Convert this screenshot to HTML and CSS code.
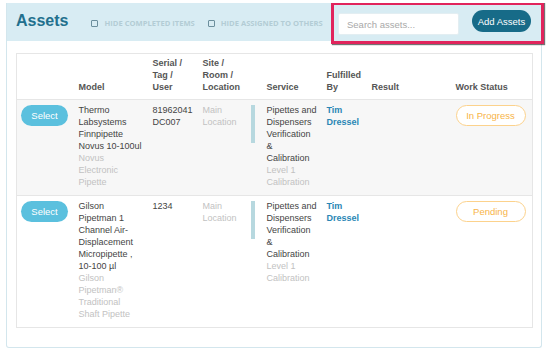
FILE: index.html
```html
<!DOCTYPE html>
<html>
<head>
<meta charset="utf-8">
<link rel="stylesheet" href="styles.css">
</head>
<body>
<div class="panel">
  <div class="panel-head">
    <h1 class="title">Assets</h1>
    <label class="check"><span class="box"></span>Hide completed items</label>
    <label class="check"><span class="box"></span>Hide assigned to others</label>
    <div class="tools">
      <input class="search" type="text" placeholder="Search assets...">
      <button class="add">Add Assets</button>
    </div>
    <div class="highlight"></div>
  </div>
  <div class="panel-body">
    <table class="assets">
      <colgroup>
        <col class="c-sel"><col class="c-model"><col class="c-serial"><col class="c-site"><col class="c-service"><col class="c-by"><col class="c-result"><col class="c-status">
      </colgroup>
      <thead>
        <tr>
          <th></th>
          <th>Model</th>
          <th>Serial / Tag / User</th>
          <th>Site / Room / Location</th>
          <th class="th-service">Service</th>
          <th>Fulfilled By</th>
          <th>Result</th>
          <th>Work Status</th>
        </tr>
      </thead>
      <tbody>
        <tr class="shaded">
          <td><button class="select">Select</button></td>
          <td><div class="model">Thermo Labsystems Finnpipette Novus 10-100ul</div><div class="muted model">Novus Electronic Pipette</div></td>
          <td><div class="serial">81962041 DC007</div></td>
          <td class="muted">Main Location</td>
          <td class="svc"><div class="service"><span class="bar"></span><div class="svc-text">Pipettes and Dispensers Verification &amp; Calibration<div class="muted">Level 1 Calibration</div></div></div></td>
          <td class="person">Tim Dressel</td>
          <td></td>
          <td><span class="status">In Progress</span></td>
        </tr>
        <tr>
          <td><button class="select">Select</button></td>
          <td><div class="model">Gilson Pipetman 1 Channel Air-Displacement Micropipette , 10-100 µl</div><div class="muted model">Gilson Pipetman® Traditional Shaft Pipette</div></td>
          <td><div class="serial">1234</div></td>
          <td class="muted">Main Location</td>
          <td class="svc"><div class="service"><span class="bar"></span><div class="svc-text">Pipettes and Dispensers Verification &amp; Calibration<div class="muted">Level 1 Calibration</div></div></div></td>
          <td class="person">Tim Dressel</td>
          <td></td>
          <td><span class="status">Pending</span></td>
        </tr>
      </tbody>
    </table>
  </div>
</div>
</body>
</html>
```
FILE: styles.css
```css
* { box-sizing: border-box; }
html, body { background: #fff; }
body {
  margin: 3px 0 0 6px;
  font-family: "Liberation Sans", Arial, sans-serif;
  font-size: 9px;
  color: #444;
}
.panel {
  width: 536px;
  border: 1px solid #d3e6ed;
  border-top: none;
  border-radius: 0 0 3px 3px;
}
.panel-head {
  position: relative;
  height: 38px;
  background: #d8ecf3;
  display: flex;
  align-items: center;
  padding: 0 0 0 9px;
}
.title {
  margin: 0 23px 0 0;
  font-size: 16px;
  font-weight: bold;
  color: #23708d;
  line-height: 20px;
  position: relative;
  top: -1px;
}
.check {
  display: flex;
  align-items: center;
  white-space: nowrap;
  font-family: "Open Sans", sans-serif;
  font-weight: 700;
  font-size: 7.6px;
  text-transform: uppercase;
  color: #b3ccd5;
  margin-right: 13px;
  position: relative;
  top: 1px;
}
.box {
  flex: none;
  width: 7px;
  height: 7px;
  border: 1px solid #6c8f9d;
  border-radius: 1px;
  margin-right: 6px;
}
.tools {
  margin-left: auto;
  display: flex;
  align-items: center;
  margin-right: 10px;
  flex: none;
}
.search {
  width: 121px;
  height: 22px;
  border: 1px solid #e3eef2;
  border-radius: 2px;
  background: #fff;
  padding: 0 8px;
  font-family: "Liberation Sans", Arial, sans-serif;
  font-size: 9.5px;
  color: #444;
  margin-right: 13px;
  margin-top: 4px;
  outline: none;
}
.search::placeholder { color: #a8a8a8; }
.add {
  width: 59px;
  height: 22px;
  border: none;
  border-radius: 11px;
  background: #176b88;
  color: #fff;
  font-family: "Liberation Sans", Arial, sans-serif;
  font-size: 9.5px;
  padding: 0;
  margin-top: -2px;
}
.highlight {
  position: absolute;
  left: 324px;
  top: -1px;
  width: 213px;
  height: 42px;
  border: 3px solid #e1245c;
  box-shadow: 1px 1px 1px rgba(0,0,0,0.55);
  pointer-events: none;
}
.panel-body {
  padding: 12px 10px 19px 9px;
}
.assets {
  width: 516px;
  table-layout: fixed;
  border-collapse: collapse;
  border: 1px solid #e6e6e6;
}
.c-sel { width: 56px; }
.c-model { width: 74px; }
.c-serial { width: 50px; }
.c-site { width: 48px; }
.c-service { width: 76px; }
.c-by { width: 45px; }
.c-result { width: 84px; }
.c-status { width: 83px; }
th {
  text-align: left;
  vertical-align: bottom;
  font-weight: bold;
  color: #555;
  line-height: 12px;
  padding: 3px 6px 6px 6px;
  border-bottom: 1px solid #e6e6e6;
}
th.th-service { padding-left: 22px; }
td {
  vertical-align: top;
  line-height: 12px;
  padding: 4px 6px 7px 6px;
}
td.svc { padding-right: 0; }
tbody tr { border-bottom: 1px solid #e6e6e6; }
tr.shaded { background: #f7f7f7; }
.muted { color: #c2c2c2; }
.model { width: 64px; }
.select {
  display: block;
  width: 47px;
  height: 21px;
  margin: 1px 0 0 -2px;
  border: none;
  border-radius: 11px;
  background: #5bc0de;
  color: #fff;
  font-family: "Liberation Sans", Arial, sans-serif;
  font-size: 9.5px;
  padding: 0;
}
.service {
  display: flex;
  align-items: flex-start;
}
.bar {
  flex: none;
  width: 4px;
  height: 38px;
  background: #b7d8df;
  margin: 1px 12px 0 0;
}
.svc-text { flex: none; width: 50.8px; }
.person {
  font-weight: bold;
  color: #2a86b5;
}
.status {
  display: flex;
  align-items: center;
  justify-content: center;
  width: 70px;
  height: 21px;
  margin-top: 1px;
  border: 1px solid #fcd28c;
  border-radius: 11px;
  background: #fff;
  color: #f7b448;
  font-size: 9.5px;
}
```
